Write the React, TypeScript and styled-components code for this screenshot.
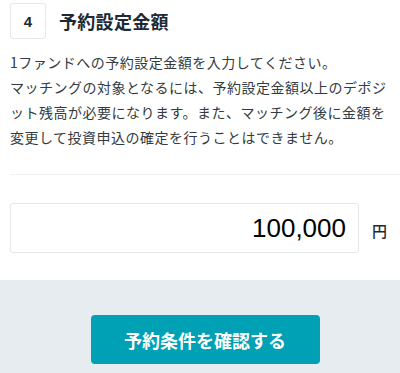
import React from "react";
import styled, { createGlobalStyle } from "styled-components";

const GlobalStyle = createGlobalStyle`
  html, body {
    margin: 0;
    padding: 0;
    background: #ffffff;
    font-family: "Noto Sans CJK JP", "Noto Sans", sans-serif;
  }
  * { box-sizing: border-box; }
`;

const Page = styled.div`
  width: 400px;
  height: 373px;
  display: flex;
  flex-direction: column;
  overflow: hidden;
`;

const Section = styled.section`
  padding: 3px 0 0 10px;
  display: flex;
  flex-direction: column;
`;

const Header = styled.div`
  display: flex;
  align-items: center;
  gap: 13px;
`;

const StepBox = styled.div`
  width: 36px;
  height: 36px;
  border: 1px solid #e3e8eb;
  border-radius: 3px;
  display: flex;
  align-items: center;
  justify-content: center;
  font-family: "Liberation Sans", Arial, sans-serif;
  font-weight: 700;
  font-size: 15px;
  color: #1d2a36;
`;

const Title = styled.h2`
  margin: 0;
  font-size: 18px;
  font-weight: 700;
  color: #1d2a36;
  letter-spacing: 0.3px;
`;

const Description = styled.p`
  margin: 11px 0 0;
  font-size: 14px;
  letter-spacing: 0.5px;
  line-height: 25px;
  color: #333a40;
`;

const Divider = styled.hr`
  margin: 24px 0 0;
  border: 0;
  height: 1px;
  background: #edf1f3;
`;

const AmountRow = styled.div`
  margin-top: 28px;
  display: flex;
  align-items: center;
`;

const AmountInput = styled.input`
  width: 349px;
  height: 50px;
  border: 1px solid #e2e7ea;
  border-radius: 3px;
  padding: 0 12px 0 12px;
  text-align: right;
  font-family: "Liberation Sans", Arial, sans-serif;
  font-size: 26px;
  color: #000;
  background: #fff;
  outline: none;
`;

const Unit = styled.span`
  margin-left: 13px;
  font-size: 15px;
  font-weight: 500;
  color: #1d2a36;
  padding-top: 4px;
`;

const Footer = styled.div`
  margin-top: 27px;
  flex: 1;
  background: #e6ecef;
  padding: 35px 0 0 10px;
  display: flex;
  justify-content: center;
  align-items: flex-start;
`;

const ConfirmButton = styled.button`
  width: 229px;
  height: 49px;
  border: 0;
  border-radius: 4px;
  background: #00a0b5;
  color: #ffffff;
  font-family: "Noto Sans CJK JP", "Noto Sans", sans-serif;
  font-size: 18px;
  font-weight: 700;
  cursor: pointer;
`;

export default function App() {
  return (
    <>
      <GlobalStyle />
      <Page>
        <Section>
          <Header>
            <StepBox>4</StepBox>
            <Title>予約設定金額</Title>
          </Header>
          <Description>
            1ファンドへの予約設定金額を入力してください。
            <br />
            マッチングの対象となるには、予約設定金額以上のデポジット残高が必要になります。また、マッチング後に金額を変更して投資申込の確定を行うことはできません。
          </Description>
          <Divider />
          <AmountRow>
            <AmountInput defaultValue="100,000" />
            <Unit>円</Unit>
          </AmountRow>
        </Section>
        <Footer>
          <ConfirmButton>予約条件を確認する</ConfirmButton>
        </Footer>
      </Page>
    </>
  );
}
